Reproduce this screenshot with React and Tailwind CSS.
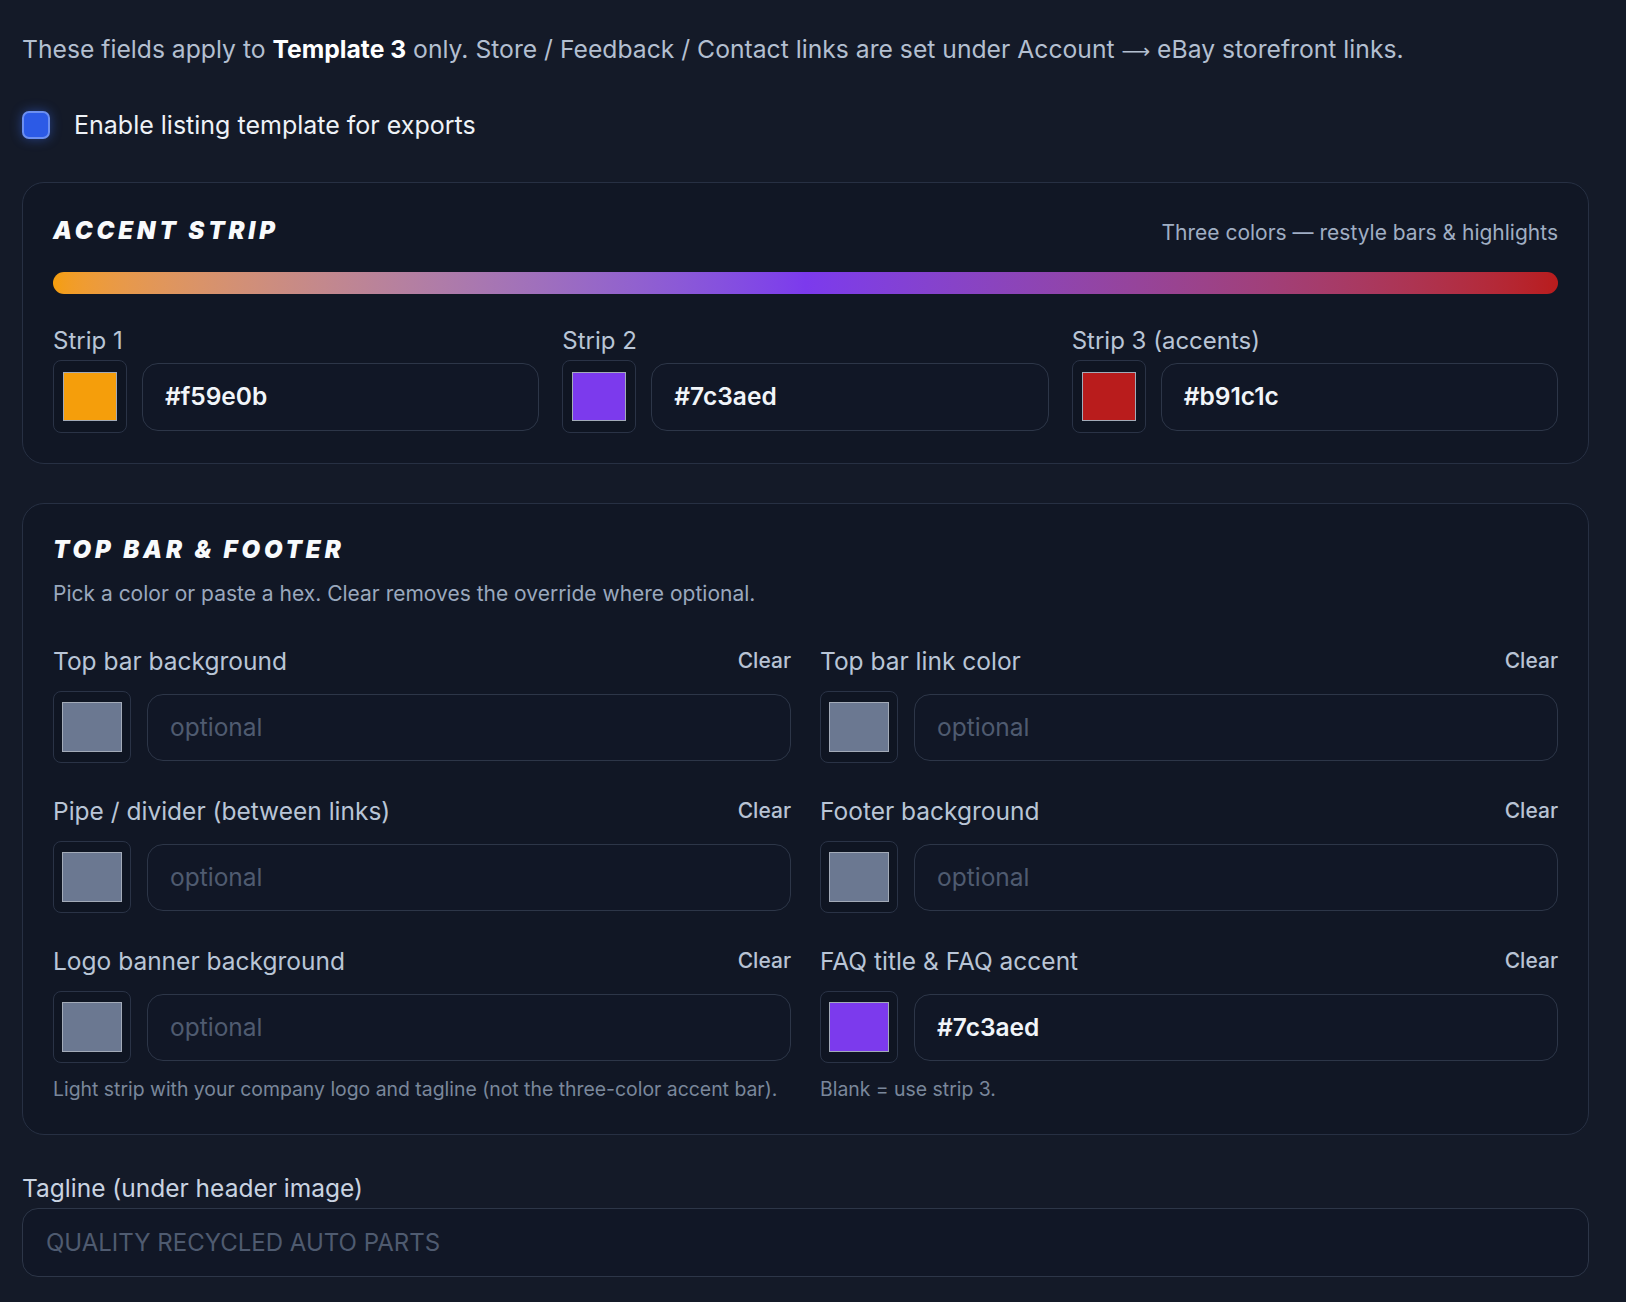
import React from "react";

const FONT = { fontFamily: "Inter, 'Noto Sans', 'Liberation Sans', sans-serif" };

function Swatch({ color, wide }) {
  return (
    <div
      className={`flex shrink-0 items-center justify-center rounded-[8px] border border-[#2a3346] bg-[#0f1522] ${
        wide ? "h-[72px] w-[78px]" : "h-[73px] w-[74px]"
      }`}
    >
      <div
        className={`border border-[#a3abb8] ${wide ? "h-[50px] w-[60px]" : "h-[49px] w-[54px]"}`}
        style={{ backgroundColor: color }}
      />
    </div>
  );
}

function HexInput({ value, placeholder, tall }) {
  return (
    <div
      className={`flex min-w-0 flex-1 items-center rounded-[16px] border border-[#2d3648] bg-[#111726] pl-[22px] ${
        tall ? "h-[67px]" : "h-[68px]"
      }`}
    >
      {value ? (
        <span className="text-[24.5px] font-semibold text-[#f1f5f9]">{value}</span>
      ) : (
        <span className="text-[24.5px] text-[#4f5b70]">{placeholder}</span>
      )}
    </div>
  );
}

function StripField({ label, color }) {
  return (
    <div className="flex flex-col">
      <div className="mb-[4px] h-[30px] text-[24px] leading-[30px] text-[#b9c5d6]">{label}</div>
      <div className="flex items-center gap-[15px]">
        <Swatch color={color} />
        <HexInput value={color} />
      </div>
    </div>
  );
}

function OverrideField({ label, value, help }) {
  return (
    <div className="flex flex-col">
      <div className="flex h-[30px] items-center justify-between">
        <span className="text-[24.5px] leading-[30px] text-[#b9c5d6]">{label}</span>
        <span className="text-[21px] font-medium leading-[30px] text-[#b8c3d4]">Clear</span>
      </div>
      <div className="mt-[15px] flex items-center gap-[16px]">
        <Swatch color={value || "#6b7891"} wide />
        <HexInput value={value} placeholder="optional" tall />
      </div>
      {help && (
        <div className="mt-[14px] text-[19.4px] leading-[24px] text-[#7a879b]">{help}</div>
      )}
    </div>
  );
}

function SectionTitle({ children }) {
  return (
    <h2 className="text-[24px] font-black italic uppercase leading-[34px] tracking-[0.16em] text-[#f8fafc]">
      {children}
    </h2>
  );
}

export default function App() {
  return (
    <div className="min-h-screen bg-[#141a28] pl-[22px] pr-[37px] pt-[32px] pb-[30px]" style={FONT}>
      <p className="text-[24.7px] leading-[34px] text-[#b3bfd0]">
        These fields apply to <span className="font-bold text-white">Template 3</span> only. Store /
        Feedback / Contact links are set under Account{" "}
        <span style={{ fontFamily: "'DejaVu Sans', sans-serif" }} className="text-[20px]">⟶</span> eBay storefront links.
      </p>

      <label className="mt-[43px] flex h-[28px] items-center gap-[24px]">
        <span className="h-[28px] w-[28px] shrink-0 rounded-[7px] border-2 border-[#6c8ff0] bg-[#2c5ae6] shadow-[0_0_12px_rgba(59,110,246,0.45)]" />
        <span className="text-[25px] leading-[28px] text-[#eef2f7]">Enable listing template for exports</span>
      </label>

      {/* Accent strip */}
      <section className="mt-[43px] rounded-[22px] border border-[#273043] bg-[#111725] px-[30px] pb-[30px] pt-[31px]">
        <div className="flex h-[34px] items-center justify-between">
          <SectionTitle>Accent strip</SectionTitle>
          <span className="mt-[4px] text-[21px] text-[#a0aec3]">Three colors — restyle bars &amp; highlights</span>
        </div>
        <div className="mt-[24px] h-[22px] rounded-full bg-gradient-to-r from-[#f59e0b] via-[#7c3aed] to-[#b91c1c]" />
        <div className="mt-[32px] grid grid-cols-3 gap-x-[23px]">
          <StripField label="Strip 1" color="#f59e0b" />
          <StripField label="Strip 2" color="#7c3aed" />
          <StripField label="Strip 3 (accents)" color="#b91c1c" />
        </div>
      </section>

      {/* Top bar & footer overrides */}
      <section className="mt-[39px] rounded-[22px] border border-[#273043] bg-[#111725] px-[30px] pb-[33px] pt-[29px]">
        <SectionTitle>Top bar &amp; footer</SectionTitle>
        <p className="mt-[13px] text-[21px] leading-[28px] text-[#9aa8bd]">
          Pick a color or paste a hex. Clear removes the override where optional.
        </p>
        <div className="mt-[38px] grid grid-cols-2 gap-x-[29px] gap-y-[33px]">
          <OverrideField label="Top bar background" />
          <OverrideField label="Top bar link color" />
          <OverrideField label="Pipe / divider (between links)" />
          <OverrideField label="Footer background" />
          <OverrideField
            label="Logo banner background"
            help="Light strip with your company logo and tagline (not the three-color accent bar)."
          />
          <OverrideField label="FAQ title & FAQ accent" value="#7c3aed" help="Blank = use strip 3." />
        </div>
      </section>

      {/* Tagline */}
      <div className="mt-[38px]">
        <div className="text-[24.5px] leading-[30px] text-[#c9d3e1]">Tagline (under header image)</div>
        <div className="mt-[5px] flex h-[69px] items-center rounded-[16px] border border-[#2d3648] bg-[#111726] pl-[23px]">
          <span className="text-[24px] text-[#4f5b70]">QUALITY RECYCLED AUTO PARTS</span>
        </div>
      </div>
    </div>
  );
}
